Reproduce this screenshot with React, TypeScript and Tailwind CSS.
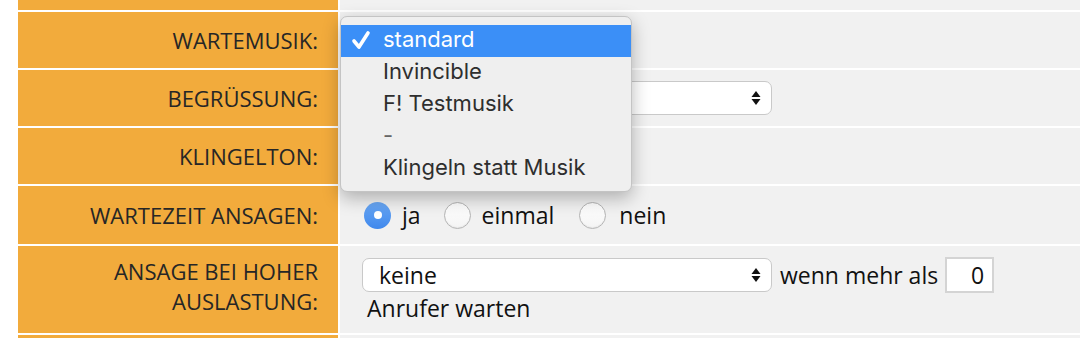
import React from "react";

const labelFont = { fontFamily: '"Open Sans", "Noto Sans", sans-serif' };

function Radio({ checked }: { checked?: boolean }) {
  if (checked) {
    return (
      <span className="w-[27px] h-[27px] rounded-full bg-gradient-to-b from-[#6aa8f5] to-[#3f88ec] flex items-center justify-center shrink-0">
        <span className="w-[8px] h-[8px] rounded-full bg-white" />
      </span>
    );
  }
  return (
    <span className="w-[27px] h-[27px] rounded-full border border-[#b5b5b5] bg-gradient-to-b from-white to-[#f4f4f4] shadow-[inset_0_-1px_1px_rgba(0,0,0,0.05)] shrink-0" />
  );
}

function Arrows() {
  return (
    <svg width="10" height="16" viewBox="0 0 10 16" className="shrink-0">
      <path d="M5 1 L9.5 7 L0.5 7 Z" fill="#111" />
      <path d="M5 15 L9.5 9 L0.5 9 Z" fill="#111" />
    </svg>
  );
}

function Select({ value }: { value: string }) {
  return (
    <div className="w-[410px] h-[34px] rounded-[7px] border border-[#c9c9c9] bg-white flex items-center justify-between pl-[16px] pr-[10px] text-[23px] text-[#111]">
      <span>{value}</span>
      <Arrows />
    </div>
  );
}

function Row({
  h,
  label,
  children,
  top,
}: {
  h: string;
  label?: React.ReactNode;
  children?: React.ReactNode;
  top?: boolean;
}) {
  return (
    <div className={`flex gap-[2px] ${h}`}>
      <div
        className={`w-[320px] bg-[#f2ab3c] text-right pr-[20px] text-[22px] font-medium leading-[30px] text-[#262626] flex flex-col ${
          top ? "justify-start pt-[10px]" : "justify-center"
        }`}
      >
        {label}
      </div>
      <div className="flex-1 bg-[#f1f1f1] pl-[22px] text-[23px] text-[#111]">{children}</div>
    </div>
  );
}

export default function App() {
  return (
    <div className="relative w-[1092px] h-[338px] bg-white overflow-hidden" style={labelFont}>
      <div className="ml-[18px] w-[1062px] flex flex-col gap-[2px]">
        <Row h="h-[10px]" />
        <Row h="h-[56px]" label="WARTEMUSIK:" />
        <Row h="h-[56px]" label="BEGRÜSSUNG:">
          <div className="h-full flex items-center">
            <Select value="" />
          </div>
        </Row>
        <Row h="h-[56px]" label="KLINGELTON:" />
        <Row h="h-[58px]" label="WARTEZEIT ANSAGEN:">
          <div className="h-full flex items-center pl-[2px]">
            <Radio checked />
            <span className="ml-[11px] mr-[23px]">ja</span>
            <Radio />
            <span className="ml-[11px] mr-[25px]">einmal</span>
            <Radio />
            <span className="ml-[13px]">nein</span>
          </div>
        </Row>
        <Row
          h="h-[87px]"
          top
          label={
            <>
              <span>ANSAGE BEI HOHER</span>
              <span>AUSLASTUNG:</span>
            </>
          }
        >
          <div className="pt-[11px] flex flex-col">
            <div className="flex items-center">
              <Select value="keine" />
              <span className="ml-[8px] mr-[7px]">wenn mehr als</span>
              <div className="w-[49px] h-[36px] border-2 border-[#d4d4d4] bg-white flex items-center justify-end pr-[8px]">
                0
              </div>
            </div>
            <div className="pl-[5px] leading-[30px]">Anrufer warten</div>
          </div>
        </Row>
        <Row h="h-[20px]" />
      </div>

      <div
        className="absolute left-[340px] top-[16px] w-[292px] h-[176px] rounded-[7px] bg-[#efefef] border border-[#c4c4c4] shadow-[0_6px_18px_rgba(0,0,0,0.28)] py-[8px] text-[22px] text-[#2e2e2e]"
        style={{ fontFamily: 'Inter, "Noto Sans", sans-serif' }}
      >
        <div className="h-[32px] bg-[#3b8ff7] text-white flex items-center pb-[3px]">
          <svg width="42" height="29" viewBox="0 0 42 29" className="shrink-0">
            <path d="M13 16 L18 22 L27 8" stroke="white" strokeWidth="3.6" fill="none" strokeLinecap="round" strokeLinejoin="round" />
          </svg>
          <span>standard</span>
        </div>
        <div className="h-[32px] flex items-center pl-[42px] pb-[3px]">Invincible</div>
        <div className="h-[32px] flex items-center pl-[42px] pb-[3px]">F! Testmusik</div>
        <div className="h-[32px] flex items-center pl-[42px] pb-[3px] text-[#666]">-</div>
        <div className="h-[32px] flex items-center pl-[42px] pb-[3px]">Klingeln statt Musik</div>
      </div>
    </div>
  );
}
